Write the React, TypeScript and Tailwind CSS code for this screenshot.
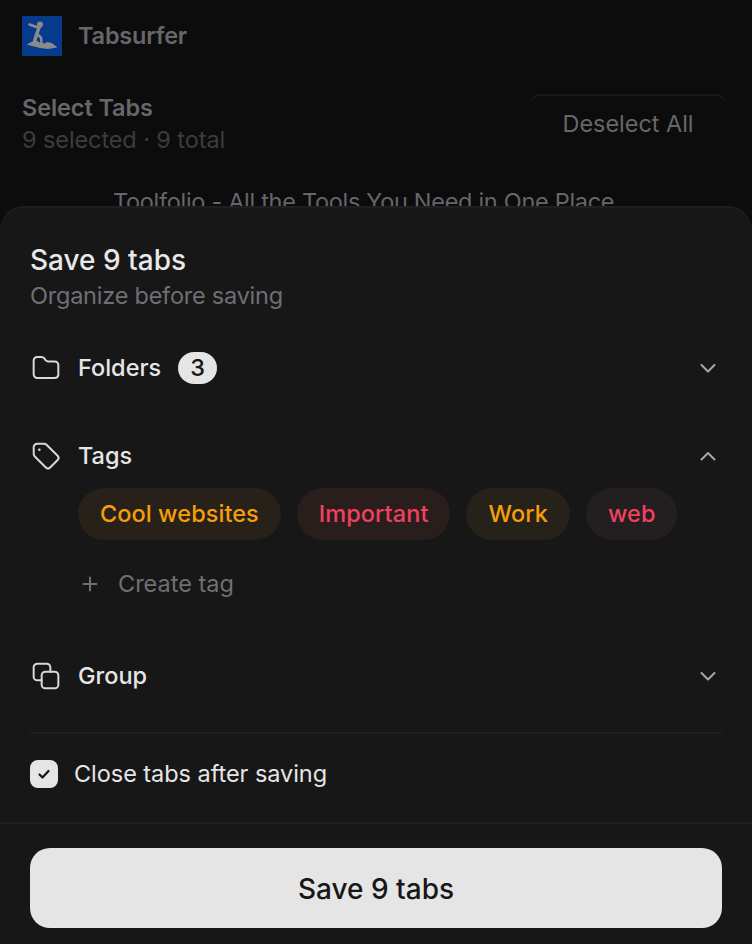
import type { ReactNode } from "react";

function Logo() {
  return (
    <svg width="40" height="40" viewBox="0 0 40 40" className="shrink-0">
      <rect width="40" height="40" fill="#053a8c" />
      <circle cx="18" cy="8.500" r="3" fill="#8b8b8b" />
      <path d="M7.500 8.500l8.500 3" stroke="#8b8b8b" strokeWidth="2.500" strokeLinecap="round" fill="none" />
      <path d="M17.500 10.500l-3 8-2 7" stroke="#8b8b8b" strokeWidth="3.500" strokeLinecap="round" fill="none" />
      <path d="M15 18l4 3.500 .5 5.500" stroke="#8b8b8b" strokeWidth="2.500" strokeLinecap="round" strokeLinejoin="round" fill="none" />
      <path d="M4.500 28.500l5-2.500 5-1.500 4 2.500 4 .5 3-1.500 4 1 5 3.500 .5 1-9 1.500-8-1-8-2z" fill="#8b8b8b" />
    </svg>
  );
}

function Pill({ label, color, bg }: { label: string; color: string; bg: string }) {
  return (
    <span className={`flex h-[52px] items-center rounded-full px-[22px] text-[23.500px] font-medium tracking-[0.06px] ${color} ${bg}`}>
      {label}
    </span>
  );
}

function Icon({ children }: { children: ReactNode }) {
  return (
    <svg width="32" height="32" viewBox="0 0 24 24" fill="none" stroke="#d8d8d8" strokeWidth="1.500" strokeLinejoin="round" strokeLinecap="round" className="shrink-0">
      {children}
    </svg>
  );
}

function FolderIcon() {
  return (
    <Icon>
      <path d="M2.750 6.500a2.750 2.750 0 0 1 2.750-2.750h3.200c.8 0 1.500.4 2 1l1 1.300c.5.600 1.200 1 2 1h4.800a2.750 2.750 0 0 1 2.750 2.750v7.450A2.750 2.750 0 0 1 18.500 19.500h-13a2.750 2.750 0 0 1-2.750-2.750z" />
    </Icon>
  );
}

function TagIcon() {
  return (
    <Icon>
      <path d="M2.750 5.500a2.750 2.750 0 0 1 2.750-2.750h5c.7 0 1.400.3 1.900.8l8.300 8.300c.9.9.9 2.300 0 3.200l-5.600 5.600c-.9.9-2.300.9-3.200 0l-8.300-8.300c-.5-.5-.8-1.200-.8-1.900z" />
      <circle cx="7" cy="7.300" r="1" fill="#d8d8d8" stroke="none" />
    </Icon>
  );
}

function GroupIcon() {
  return (
    <Icon>
      <path d="M8.750 15.250H5.500a2.750 2.750 0 0 1-2.750-2.750v-7a2.750 2.750 0 0 1 2.750-2.750h7a2.750 2.750 0 0 1 2.750 2.750v3.250" />
      <rect x="8.750" y="8.750" width="12.500" height="12.500" rx="2.750" />
    </Icon>
  );
}

function Chevron({ up }: { up?: boolean }) {
  return (
    <svg width="24" height="24" viewBox="0 0 24 24" fill="none" stroke="#a8a8a8" strokeWidth="2" strokeLinecap="round" strokeLinejoin="round" className="ml-auto mr-[2px] shrink-0">
      <path d={up ? "M5.500 15.500l6.500-6.500 6.500 6.500" : "M5.500 9l6.500 6.500L18.500 9"} />
    </svg>
  );
}

function Plus() {
  return (
    <svg width="24" height="24" viewBox="0 0 24 24" fill="none" stroke="#6f6f74" strokeWidth="2" strokeLinecap="round" className="shrink-0">
      <path d="M12 5.500v13M5.500 12h13" />
    </svg>
  );
}

export default function App() {
  return (
    <div className="relative h-[944px] w-[752px] overflow-hidden bg-[#0c0c0d] font-['Inter',sans-serif]">
      <div className="flex items-center gap-4 px-[22px] pt-4">
        <Logo />
        <span className="text-[23.500px] font-semibold tracking-[-0.2px] text-[#66666b]">Tabsurfer</span>
      </div>
      <div className="mt-[36px] flex items-start justify-between pl-[22px] pr-[25px]">
        <div className="tracking-[-0.1px]">
          <div className="text-[23.500px] leading-8 font-semibold text-[#66666b]">Select Tabs</div>
          <div className="text-[23.500px] leading-8 text-[#3c3c40]">9 selected · 9 total</div>
        </div>
        <div className="mt-[2px] flex h-[58px] w-[198px] items-center justify-center rounded-t-[12px] border-t-2 border-[#19191b] text-[23.500px] font-normal tracking-[-0.05px] text-[#66666b]">
          Deselect All
        </div>
      </div>
      <div className="mt-[30px] pl-[113px] text-[23.500px] leading-8 tracking-[-0.3px] whitespace-nowrap text-[#66666b]">
        Toolfolio - All the Tools You Need in One Place
      </div>

      <div className="absolute inset-x-0 top-[206px] bottom-0 flex flex-col rounded-t-[24px] border-t-2 border-[#221e1f] bg-[#171717]">
        <div className="flex-1 px-[30px] pt-[34px]">
          <div className="text-[28px] leading-9 font-medium text-[#e8e8e8]">Save 9 tabs</div>
          <div className="mt-[1px] text-[23.500px] leading-[34px] tracking-[-0.23px] text-[#6f6f74]">Organize before saving</div>

          <div className="mt-[31px] flex h-[48px] items-center">
            <FolderIcon />
            <span className="ml-4 text-[23.500px] font-medium text-[#e6e6e6]">Folders</span>
            <span className="ml-[17px] flex h-[32px] w-[39px] items-center justify-center rounded-full bg-[#e5e5e5] text-[23.500px] font-medium text-[#171717]">3</span>
            <Chevron />
          </div>

          <div className="mt-[40px] flex h-[48px] items-center">
            <TagIcon />
            <span className="ml-4 text-[23.500px] font-medium text-[#e6e6e6]">Tags</span>
            <Chevron up />
          </div>
          <div className="mt-[8px] ml-[48px] flex gap-4">
            <Pill label="Cool websites" color="text-[#f59e0b]" bg="bg-[#272119]" />
            <Pill label="Important" color="text-[#f0415f]" bg="bg-[#291e1b]" />
            <Pill label="Work" color="text-[#f59e0b]" bg="bg-[#262119]" />
            <Pill label="web" color="text-[#f0415f]" bg="bg-[#231f20]" />
          </div>
          <div className="mt-[18px] ml-[48px] flex h-[52px] items-center gap-4 text-[#6f6f74]">
            <Plus />
            <span className="text-[23.500px]">Create tag</span>
          </div>

          <div className="mt-[42px] flex h-[48px] items-center">
            <GroupIcon />
            <span className="ml-4 text-[23.500px] font-medium text-[#e6e6e6]">Group</span>
            <Chevron />
          </div>

          <div className="mt-[32px] border-t-2 border-[#221e1f] pt-[24px]">
            <label className="flex items-center gap-[16px]">
              <span className="flex h-[28px] w-[28px] items-center justify-center rounded-[8px] bg-[#e5e5e5]">
                <svg width="14" height="14" viewBox="0 0 14 14" fill="none" stroke="#171717" strokeWidth="2.200" strokeLinecap="round" strokeLinejoin="round">
                  <path d="M2.500 7.500l3 3 6-6.500" />
                </svg>
              </span>
              <span className="text-[23.500px] leading-8 font-normal tracking-[-0.05px] text-[#e6e6e6]">Close tabs after saving</span>
            </label>
          </div>
        </div>
        <div className="border-t-2 border-[#221e1f] px-[30px] pt-[24px] pb-[16px]">
          <div className="flex h-[80px] items-center justify-center rounded-[20px] bg-[#e5e5e5] pt-[1px] text-[28px] font-medium text-[#171717]">
            Save 9 tabs
          </div>
        </div>
      </div>
    </div>
  );
}
